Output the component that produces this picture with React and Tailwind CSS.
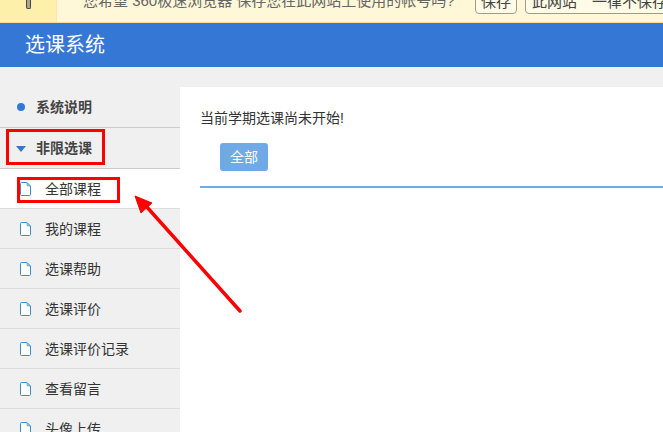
import React from "react";

function DocIcon() {
  return (
    <svg width="11" height="14" viewBox="0 0 11 14" fill="none" className="shrink-0">
      <path d="M1.5 .5H7L10.5 4V12.5A1 1 0 0 1 9.5 13.5H1.5A1 1 0 0 1 .5 12.5V1.5A1 1 0 0 1 1.5 .5Z" stroke="#3f8cc2" strokeWidth="1" fill="#fff" />
      <path d="M7 1V4H10Z" fill="#a9cde6" stroke="#3f8cc2" strokeWidth=".5" />
    </svg>
  );
}

const items = ["我的课程", "选课帮助", "选课评价", "选课评价记录", "查看留言", "头像上传"];

export default function App() {
  return (
    <div className="relative h-[432px] w-[663px] overflow-hidden bg-[#f0f0f0] font-['Liberation_Sans','Noto_Sans_CJK_SC',sans-serif] text-[14px] text-[#333]">
      <div className="flex h-[23px] items-end overflow-hidden border-b border-[#f6dd9c] bg-[#fff8d8]">
        <div className="flex h-[23px] w-[57px] shrink-0 border-r border-[#fbe6ac] bg-[#fdf0aa]">
          <div className="ml-[26px] h-[10px] w-[5px] rounded-b-[2px] border-x-[1.5px] border-b-[1.5px] border-[#444] bg-[#a8a595]" />
        </div>
        <div className="flex h-[23px] flex-1 items-start whitespace-nowrap">
          <span className="ml-[26px] mt-[-8px] w-[392px] text-[15px] leading-[20px] text-[#666]">您希望 360极速浏览器 保存您在此网站上使用的帐号吗?</span>
          <span className="mt-[-8px] flex h-[23px] w-[42px] items-center justify-center rounded-[4px] border border-[#a09c8a] bg-[#fffbe6] text-[15px] text-[#444]">保存</span>
          <span className="ml-[8px] mt-[-8px] flex h-[23px] w-[160px] items-center rounded-[4px] border border-[#a09c8a] bg-[#fffbe6] pl-[6px] text-[15px] text-[#444]">此网站　一律不保存密码</span>
        </div>
      </div>

      <div className="flex h-[44px] items-center bg-[#3577d4] pl-[25px] text-[20px] text-white">选课系统</div>

      <div className="mt-[20px] flex">
        <aside className="w-[180px] shrink-0">
          <div className="flex h-[41px] items-center border-b border-[#ccc] pl-[17px] font-bold text-[#444]">
            <span className="h-[8px] w-[8px] rounded-full bg-[#3577d4]" />
            <span className="ml-[11px]">系统说明</span>
          </div>
          <div className="flex h-[41px] items-center border-b border-[#ccc] pl-[16px] font-bold text-[#444]">
            <span className="mt-[1px] h-0 w-0 border-x-[5px] border-t-[6px] border-x-transparent border-t-[#3577d4]" />
            <span className="ml-[10px]">非限选课</span>
          </div>
          <div className="flex h-[40px] items-center gap-[14px] border-b border-[#ddd] bg-white pl-[20px]">
            <DocIcon />
            <span className="pt-[1px]">全部课程</span>
          </div>
          {items.map((t) => (
            <div key={t} className="flex h-[40px] items-center gap-[14px] border-b border-[#ddd] pl-[20px]">
              <DocIcon />
              <span className="pt-[1px]">{t}</span>
            </div>
          ))}
        </aside>
        <main className="h-[345px] flex-1 bg-white pl-[20px] pr-0">
          <p className="pt-[21px] leading-[20px]">当前学期选课尚未开始!</p>
          <button className="ml-[20px] mt-[15px] block h-[28px] w-[48px] rounded-[3px] bg-[#6faae6] text-[14px] text-white">全部</button>
          <div className="mt-[15px] h-[2px] bg-[#6faae6]" />
        </main>
      </div>

      <div className="absolute left-[6px] top-[129px] h-[36px] w-[99px] border-[3px] border-[#f00]" />
      <div className="absolute left-[17px] top-[177px] h-[26px] w-[103px] border-[3px] border-[#f00]" />
      <svg className="absolute left-[130px] top-[190px]" width="115" height="128" viewBox="0 0 115 128" fill="none">
        <path d="M110 121L16 16" stroke="#f00" strokeWidth="3.5" strokeLinecap="round" />
        <path d="M5 6L22 13L11 23Z" fill="#f00" stroke="#f00" />
      </svg>
    </div>
  );
}
